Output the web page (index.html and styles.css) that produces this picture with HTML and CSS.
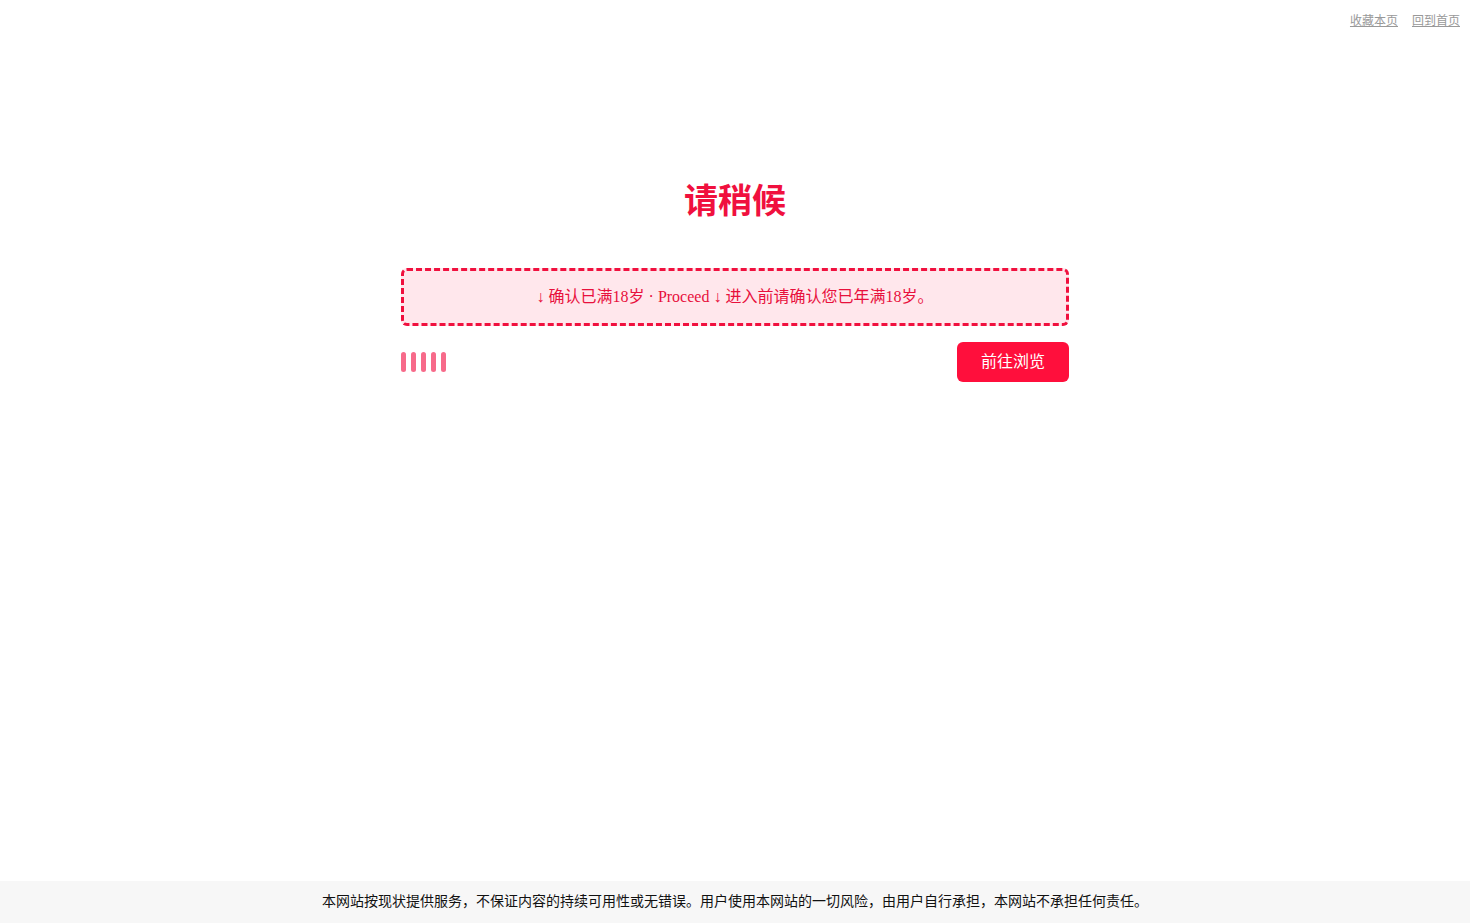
FILE: index.html
```html
<!DOCTYPE html>
<html lang="zh-CN">
<head>
<meta charset="utf-8">
<title>请稍候</title>
<link rel="stylesheet" href="styles.css">
</head>
<body>
<div class="top-links">
  <a href="#">收藏本页</a>
  <a href="#">回到首页</a>
</div>
<main class="wrap">
  <h1 class="title">请稍候</h1>
  <div class="notice">↓ 确认已满18岁 · Proceed ↓ 进入前请确认您已年满18岁。</div>
  <div class="actions">
    <div class="bars"><span></span><span></span><span></span><span></span><span></span></div>
    <a class="btn" href="#">前往浏览</a>
  </div>
</main>
<footer class="footer">本网站按现状提供服务，不保证内容的持续可用性或无错误。用户使用本网站的一切风险，由用户自行承担，本网站不承担任何责任。</footer>
</body>
</html>
```
FILE: styles.css
```css
html, body {
  margin: 0;
  padding: 0;
  height: 100%;
}
body {
  font-family: "Liberation Serif", "Noto Sans CJK SC", serif;
  background: #fff;
  color: #000;
  display: flex;
  flex-direction: column;
  min-height: 923px;
}
.top-links {
  display: flex;
  justify-content: flex-end;
  gap: 14px;
  padding: 13px 10px 0 0;
  font-size: 12px;
  line-height: 16px;
}
.top-links a {
  color: #999;
  text-decoration: underline;
}
.wrap {
  flex: 1;
  width: 668px;
  margin: 0 auto;
  padding-top: 148px;
}
.title {
  margin: 0;
  text-align: center;
  font-family: "Noto Sans CJK SC", sans-serif;
  font-weight: bold;
  font-size: 34px;
  line-height: 44px;
  color: #f0103e;
}
.notice {
  margin-top: 47px;
  height: 58px;
  box-sizing: border-box;
  border: 3px dashed #f0103e;
  border-radius: 6px;
  background: #ffe7ec;
  color: #e8103c;
  font-size: 16px;
  display: flex;
  align-items: center;
  justify-content: center;
  padding-bottom: 4px;
}
.actions {
  margin-top: 16px;
  display: flex;
  justify-content: space-between;
  align-items: center;
}
.bars {
  display: flex;
  gap: 5px;
}
.bars span {
  width: 5px;
  height: 20px;
  border-radius: 3px;
  background: #f76a8a;
}
.btn {
  width: 112px;
  height: 40px;
  border-radius: 6px;
  background: #ff0f3c;
  color: #fff;
  font-size: 16px;
  text-decoration: none;
  display: flex;
  align-items: center;
  justify-content: center;
  padding-bottom: 5px;
  box-sizing: border-box;
}
.footer {
  background: #f7f7f7;
  height: 42px;
  display: flex;
  align-items: center;
  justify-content: center;
  font-size: 14px;
  color: #111;
  padding-bottom: 4px;
  box-sizing: border-box;
}
```
